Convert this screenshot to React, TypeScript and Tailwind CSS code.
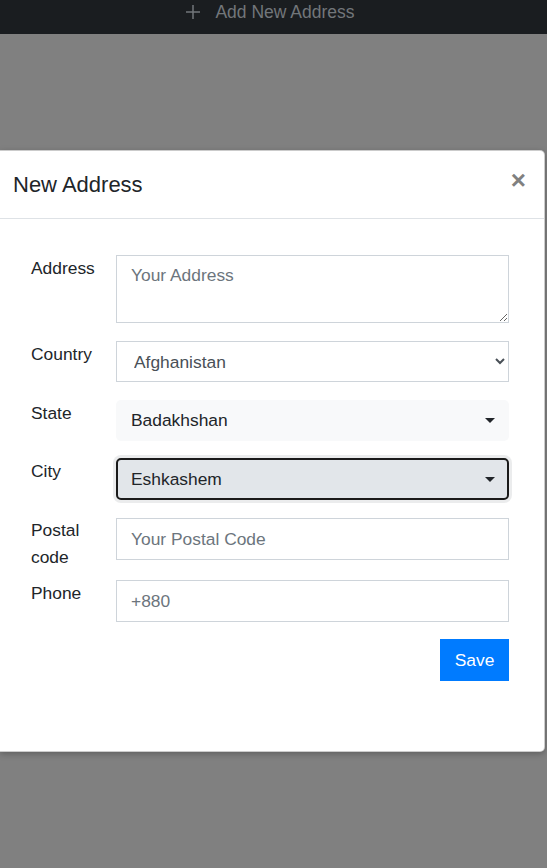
import { useState } from 'react';

function Caret() {
  return (
    <span className="inline-block w-0 h-0 border-l-[5px] border-r-[5px] border-t-[5px] border-l-transparent border-r-transparent border-t-[#212529]" />
  );
}

export default function App() {
  const [country, setCountry] = useState('Afghanistan');

  return (
    <div
      className="min-h-[868px] w-full bg-[#808080] overflow-hidden"
      style={{ fontFamily: '"Liberation Sans", Arial, sans-serif' }}
    >
      {/* Top bar under the backdrop */}
      <div className="h-[34px] bg-[#1a1d20] flex justify-center pr-[6px]">
        <div className="flex items-start gap-[15px] text-[17.5px] leading-[26px] text-[#72767a] -mt-[1px]">
          <svg width="14" height="14" viewBox="0 0 14 14" className="mt-[6px]" fill="none" stroke="#72767a" strokeWidth="1.5">
            <path d="M7 0v14M0 7h14" />
          </svg>
          <span>Add New Address</span>
        </div>
      </div>

      {/* Modal */}
      <div className="mt-[116px] w-[545px] h-[602px] bg-white border-y border-r border-[rgba(0,0,0,0.2)] rounded-r-[5px] shadow-[0_2px_6px_rgba(0,0,0,0.25)]">
        {/* Header */}
        <div className="h-[68px] flex items-center justify-between pl-[13px] pr-[18px] border-b border-[#dee2e6]">
          <h5 className="text-[22px] leading-[33px] text-[#212529] -mt-[1px]">New Address</h5>
          <button className="text-[26px] font-bold leading-none text-[#808080] -mt-[9px]">×</button>
        </div>

        {/* Body */}
        <div className="pl-[31px] pr-[35px] pt-[36px] text-[17.4px] leading-[27px] text-[#212529]">
          <div className="flex h-[68px] mb-[18px]">
            <label className="w-[85px] shrink-0">Address</label>
            <textarea
              placeholder="Your Address"
              className="flex-1 h-[68px] border border-[#ced4da] px-[14px] py-[6px] leading-[26px] text-[#495057] placeholder:text-[#6c757d] outline-none"
            />
          </div>

          <div className="flex h-[41px] mb-[18px]">
            <label className="w-[85px] shrink-0">Country</label>
            <select
              value={country}
              onChange={(e) => setCountry(e.target.value)}
              className="flex-1 h-[41px] border border-[#ced4da] bg-white pl-[13px] pr-[8px] text-[#495057] outline-none"
            >
              <option>Afghanistan</option>
              <option>Bangladesh</option>
            </select>
          </div>

          <div className="flex h-[41px] mb-[17px]">
            <label className="w-[85px] shrink-0">State</label>
            <div className="flex-1 h-[41px] bg-[#f8f9fa] rounded-[5px] flex items-center justify-between pl-[15px] pr-[14px]">
              <span>Badakhshan</span>
              <Caret />
            </div>
          </div>

          <div className="flex h-[42px] mb-[18px]">
            <label className="w-[85px] shrink-0">City</label>
            <div className="flex-1 h-[42px] bg-[#e2e6ea] border-2 border-[#1a1a1a] rounded-[5px] shadow-[0_0_0_3px_rgba(216,217,219,0.5)] flex items-center justify-between pl-[13px] pr-[12px]">
              <span>Eshkashem</span>
              <Caret />
            </div>
          </div>

          <div className="flex h-[42px] mb-[20px]">
            <label className="w-[85px] shrink-0 leading-[27px] -mt-[1px]">
              Postal
              <br />
              code
            </label>
            <input
              placeholder="Your Postal Code"
              className="flex-1 h-[42px] border border-[#ced4da] px-[14px] text-[#495057] placeholder:text-[#6c757d] outline-none"
            />
          </div>

          <div className="flex h-[42px] mb-[17px]">
            <label className="w-[85px] shrink-0">Phone</label>
            <input
              placeholder="+880"
              className="flex-1 h-[42px] border border-[#ced4da] px-[14px] text-[#495057] placeholder:text-[#6c757d] outline-none"
            />
          </div>

          <div className="flex justify-end">
            <button className="w-[69px] h-[42px] bg-[#007bff] text-white">Save</button>
          </div>
        </div>
      </div>
    </div>
  );
}
